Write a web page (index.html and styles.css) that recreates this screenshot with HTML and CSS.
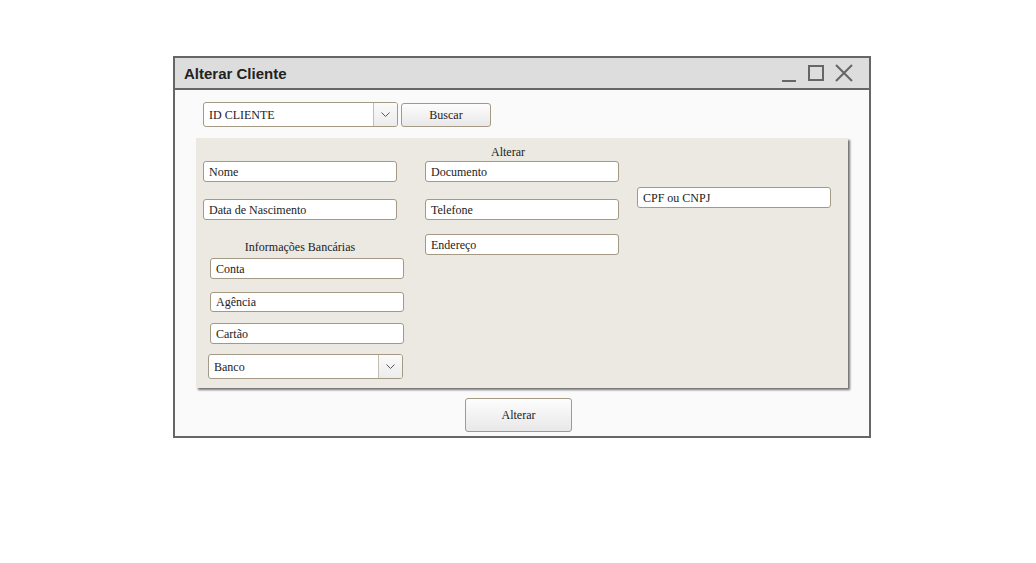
FILE: index.html
```
<!DOCTYPE html>
<html lang="pt">
<head>
<meta charset="utf-8">
<title>Alterar Cliente</title>
<link rel="stylesheet" href="styles.css">
</head>
<body>
<div class="window">
  <div class="titlebar">
    <span class="title">Alterar Cliente</span>
    <svg class="controls" width="76" height="20" viewBox="0 0 76 20">
      <line x1="0" y1="17" x2="14" y2="17" stroke="#666" stroke-width="2"/>
      <rect x="27" y="2" width="14" height="14" fill="none" stroke="#666" stroke-width="2"/>
      <path d="M54 1 L70 17 M70 1 L54 17" stroke="#666" stroke-width="2" fill="none"/>
    </svg>
  </div>
  <div class="body">
    <div class="search-row">
      <div class="combo combo-id">
        <span class="combo-text">ID CLIENTE</span>
        <span class="combo-btn"><svg width="9" height="5" viewBox="0 0 9 5"><path d="M0.5 0.5 L4.5 4.5 L8.5 0.5" stroke="#555" fill="none"/></svg></span>
      </div>
      <button class="btn btn-buscar">Buscar</button>
    </div>
    <div class="panel">
      <div class="col col1">
        <div class="field f-nome">Nome</div>
        <div class="field f-data">Data de Nascimento</div>
        <div class="label l-banc">Informações Bancárias</div>
        <div class="field f-conta">Conta</div>
        <div class="field f-agencia">Agência</div>
        <div class="field f-cartao">Cartão</div>
        <div class="combo combo-banco">
          <span class="combo-text">Banco</span>
          <span class="combo-btn"><svg width="9" height="5" viewBox="0 0 9 5"><path d="M0.5 0.5 L4.5 4.5 L8.5 0.5" stroke="#555" fill="none"/></svg></span>
        </div>
      </div>
      <div class="col col2">
        <div class="label l-alterar">Alterar</div>
        <div class="field f-doc">Documento</div>
        <div class="field f-tel">Telefone</div>
        <div class="field f-end">Endereço</div>
      </div>
      <div class="col col3">
        <div class="field f-cpf">CPF ou CNPJ</div>
      </div>
    </div>
    <div class="footer">
      <button class="btn btn-alterar">Alterar</button>
    </div>
  </div>
</div>
</body>
</html>
```
FILE: styles.css
```
html, body {
  margin: 0;
  padding: 0;
  background: #ffffff;
  width: 1036px;
  height: 563px;
  overflow: hidden;
}
body {
  font-family: "Liberation Serif", Tinos, "Times New Roman", Times, "DejaVu Serif", serif;
  font-size: 12px;
  color: #222;
}
.window {
  margin: 56px 0 0 173px;
  width: 694px;
  height: 378px;
  border: 2px solid #666;
  background: #fafafa;
}
.titlebar {
  height: 30px;
  background: #dddddd;
  border-bottom: 2px solid #666;
  display: flex;
  align-items: center;
  justify-content: space-between;
  padding: 0 11px 0 9px;
}
.title {
  font-family: "Liberation Sans", Arial, sans-serif;
  font-weight: bold;
  font-size: 15px;
  color: #222;
  margin-top: 1px;
}
.controls {
  display: block;
  margin-top: 1px;
}
.body {
  padding-top: 12px;
}
.search-row {
  display: flex;
  margin-left: 28px;
  gap: 3px;
  height: 25px;
}
.combo {
  display: flex;
  box-sizing: border-box;
  border: 1px solid #a39985;
  border-radius: 3px;
  background: #fff;
  overflow: hidden;
}
.combo-text {
  flex: 1;
  padding-left: 5px;
  line-height: 24px;
}
.combo-btn {
  width: 23px;
  border-left: 1px solid #c5bdb0;
  background: linear-gradient(#fafafa, #ececec);
  display: flex;
  align-items: center;
  justify-content: center;
}
.combo-id {
  width: 195px;
  height: 25px;
}
.btn {
  box-sizing: border-box;
  font-family: "Liberation Serif", Tinos, "Times New Roman", Times, "DejaVu Serif", serif;
  font-size: 12px;
  color: #222;
  border: 1px solid #a39985;
  border-radius: 3px;
  background: linear-gradient(#fdfdfd, #e8e8e8);
  padding: 0;
}
.btn-buscar {
  width: 90px;
  height: 24px;
  margin-top: 1px;
}
.panel {
  margin: 11px 0 0 21px;
  width: 652px;
  height: 250px;
  background: #ece9e3;
  box-shadow: 2px 2px 2px rgba(0, 0, 0, 0.55);
  display: flex;
  padding-left: 7px;
  box-sizing: border-box;
}
.col {
  display: flex;
  flex-direction: column;
}
.col1 { width: 222px; }
.col2 { width: 212px; }
.col3 { width: 194px; }
.field {
  box-sizing: border-box;
  width: 194px;
  height: 21px;
  border: 1px solid #a39985;
  border-radius: 3px;
  background: #fff;
  padding-left: 5px;
  line-height: 20px;
}
.label {
  line-height: 14px;
  height: 14px;
}
.f-nome { margin-top: 23px; }
.f-data { margin-top: 17px; }
.l-banc { margin-top: 20px; width: 194px; text-align: center; }
.f-conta { margin-top: 4px; margin-left: 7px; }
.f-agencia { margin-top: 13px; margin-left: 7px; height: 20px; line-height: 19px; }
.f-cartao { margin-top: 11px; margin-left: 7px; }
.combo-banco {
  margin-top: 10px;
  margin-left: 5px;
  width: 195px;
  height: 25px;
}
.l-alterar { margin-top: 7px; padding-left: 66px; }
.f-doc { margin-top: 2px; }
.f-tel { margin-top: 17px; }
.f-end { margin-top: 14px; }
.f-cpf { margin-top: 49px; }
.footer {
  display: flex;
  margin-top: 10px;
  padding-left: 290px;
}
.btn-alterar {
  width: 107px;
  height: 34px;
}
```
